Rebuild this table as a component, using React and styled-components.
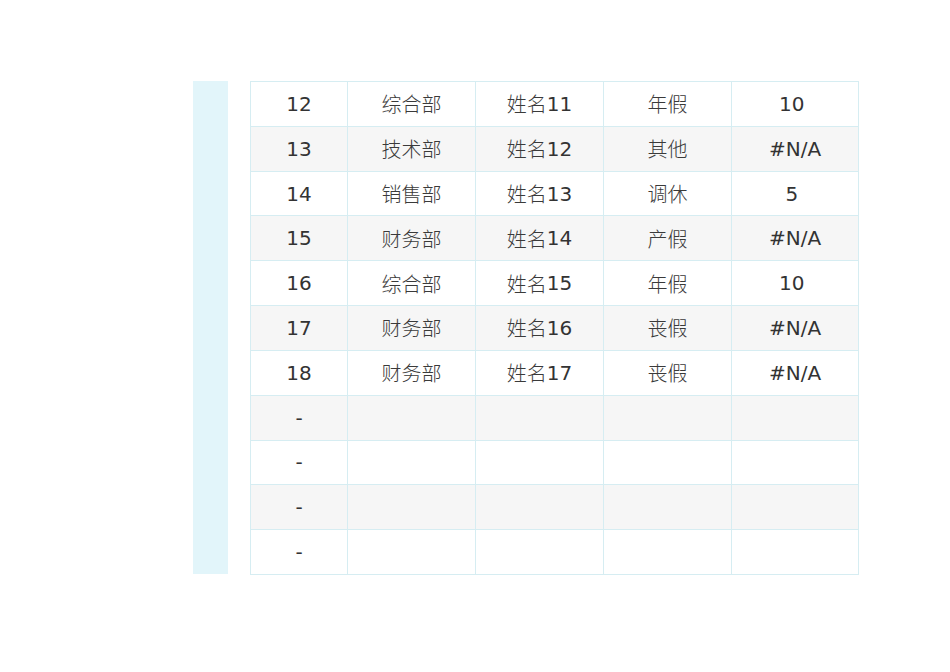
import React from 'react';
import styled, { createGlobalStyle } from 'styled-components';

const GlobalStyle = createGlobalStyle`
  body {
    margin: 0;
    background: #ffffff;
  }
`;

const Page = styled.div`
  width: 950px;
  height: 672px;
  padding: 81px 0 0 193px;
  box-sizing: border-box;
  display: flex;
  align-items: flex-start;
  gap: 22px;
`;

const Strip = styled.div`
  width: 35px;
  height: 493px;
  background: #e2f5fa;
`;

const Table = styled.div`
  display: grid;
  grid-template-columns: 97px 128px 128px 128px 127px;
  grid-auto-rows: 44.82px;
  width: 609px;
  border-top: 1px solid #d6edf2;
  border-left: 1px solid #d6edf2;
  box-sizing: border-box;
`;

const Cell = styled.div`
  display: flex;
  align-items: center;
  justify-content: center;
  box-sizing: border-box;
  border-right: 1px solid #d6edf2;
  border-bottom: 1px solid #d6edf2;
  background: ${(p) => (p.$shade ? '#f6f6f6' : '#ffffff')};
  font-family: 'DejaVu Sans', 'Noto Sans CJK SC', sans-serif;
  font-size: 20px;
  color: #333333;
  white-space: pre;
`;

const Han = styled.span`
  font-family: 'Noto Sans CJK SC', sans-serif;
  font-weight: 300;
  color: #3a3a3a;
`;

const rows = [
  ['12', '综合部', ['姓名', '11'], '年假', '10 '],
  ['13', '技术部', ['姓名', '12'], '其他', '#N/A'],
  ['14', '销售部', ['姓名', '13'], '调休', '5 '],
  ['15', '财务部', ['姓名', '14'], '产假', '#N/A'],
  ['16', '综合部', ['姓名', '15'], '年假', '10 '],
  ['17', '财务部', ['姓名', '16'], '丧假', '#N/A'],
  ['18', '财务部', ['姓名', '17'], '丧假', '#N/A'],
  ['-', '', '', '', ''],
  ['-', '', '', '', ''],
  ['-', '', '', '', ''],
  ['-', '', '', '', ''],
];

const renderValue = (val, j) => {
  if (Array.isArray(val)) {
    return (
      <>
        <Han>{val[0]}</Han>
        {val[1]}
      </>
    );
  }
  if (j === 1 || j === 3) return <Han>{val}</Han>;
  return val;
};

export default function App() {
  return (
    <>
      <GlobalStyle />
      <Page>
        <Strip />
        <Table>
          {rows.map((row, i) =>
            row.map((val, j) => (
              <Cell key={`${i}-${j}`} $shade={i % 2 === 1}>
                {renderValue(val, j)}
              </Cell>
            ))
          )}
        </Table>
      </Page>
    </>
  );
}
